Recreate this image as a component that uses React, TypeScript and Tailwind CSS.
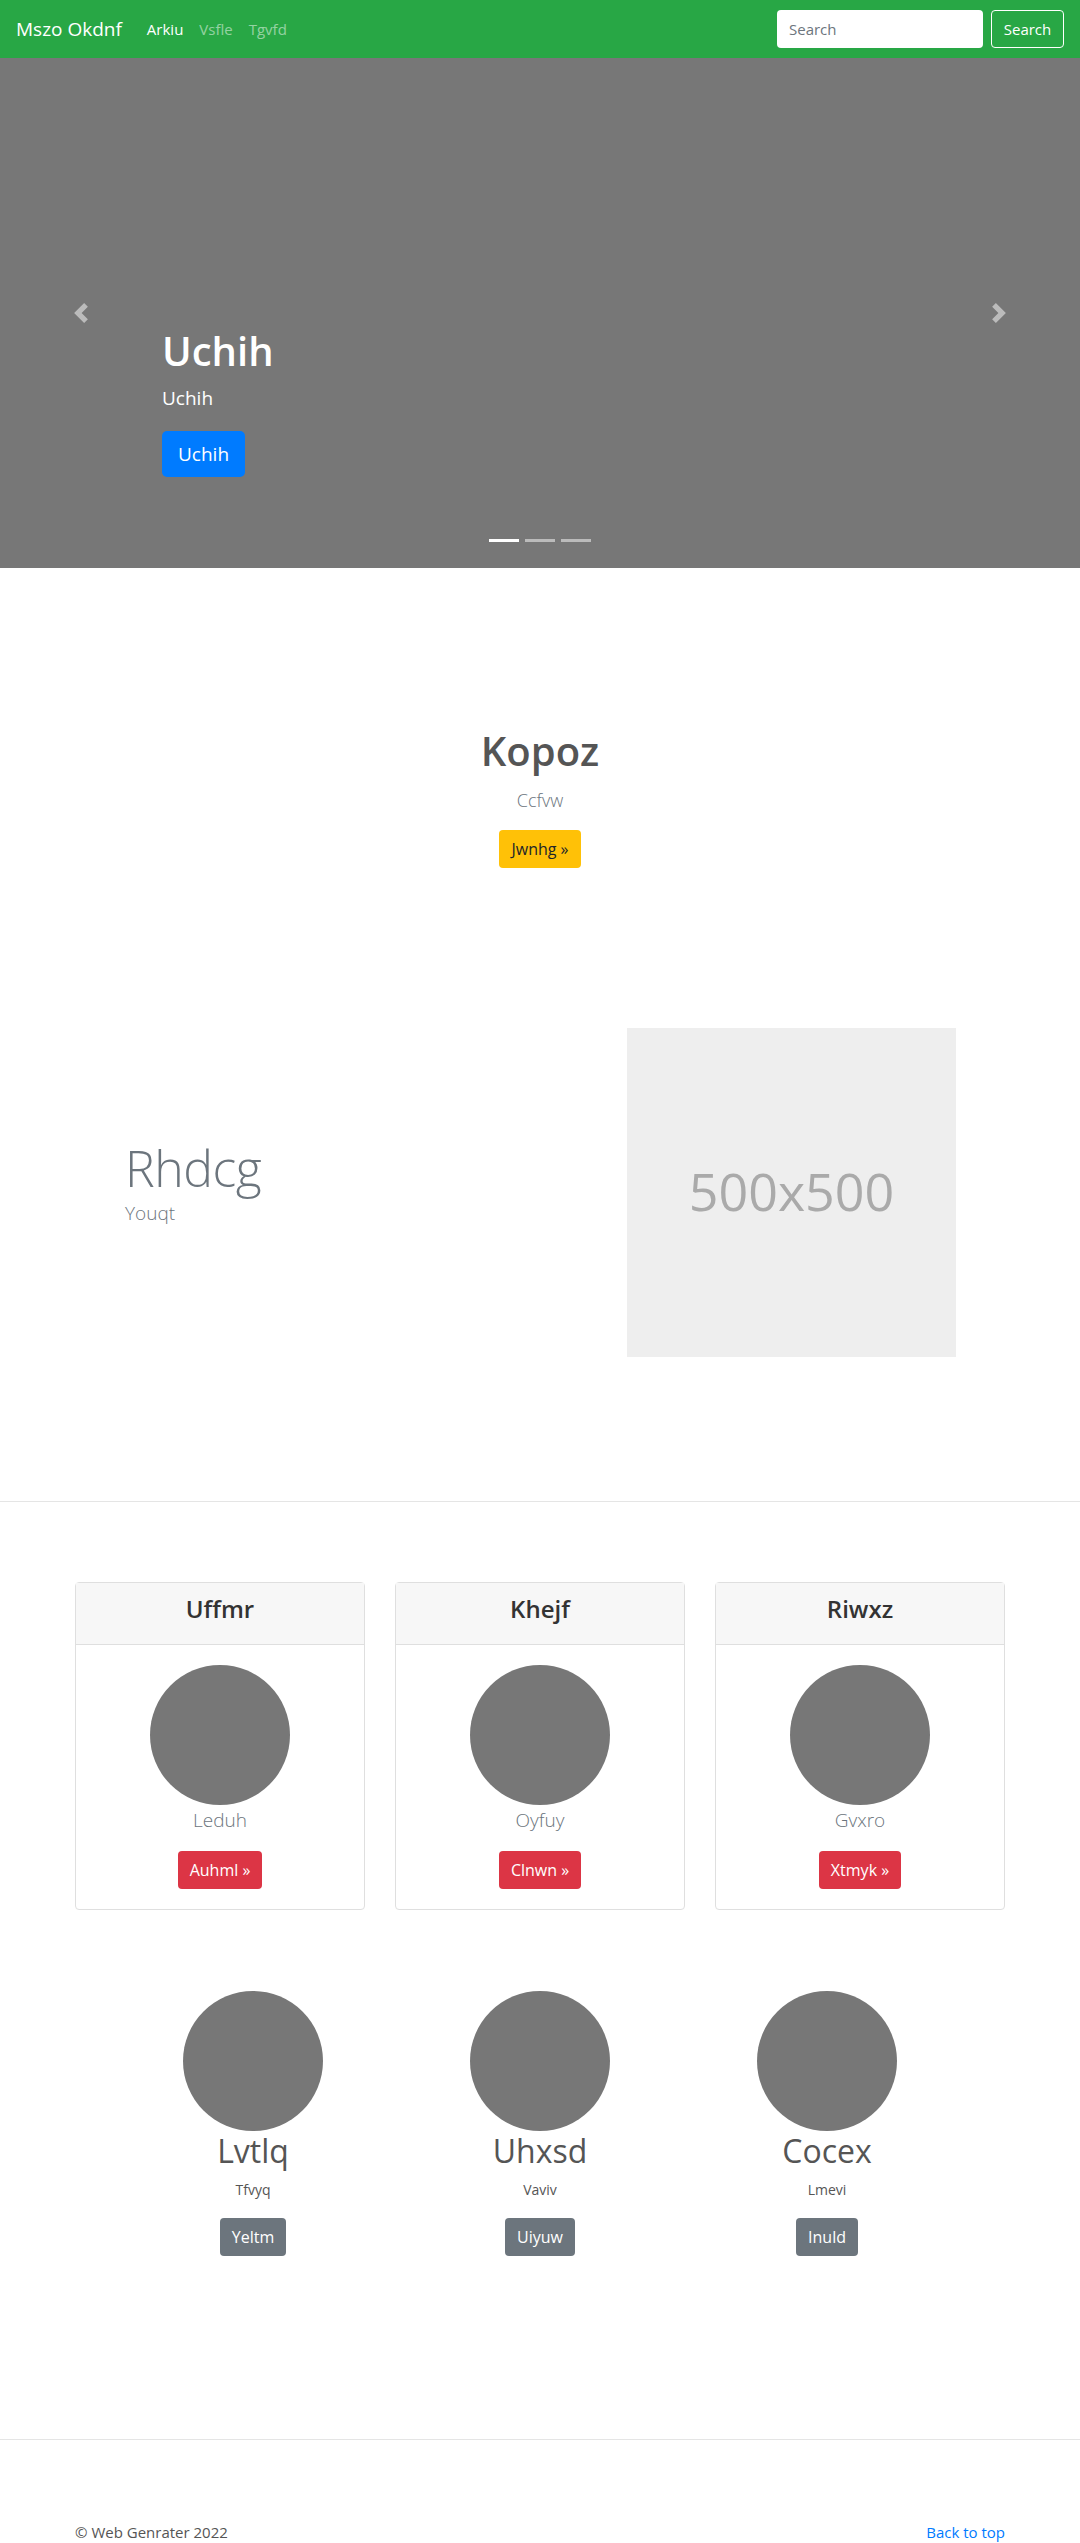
const cards = [
  { title: "Uffmr", text: "Leduh", btn: "Auhml »" },
  { title: "Khejf", text: "Oyfuy", btn: "Clnwn »" },
  { title: "Riwxz", text: "Gvxro", btn: "Xtmyk »" },
];

const people = [
  { name: "Lvtlq", text: "Tfvyq", btn: "Yeltm" },
  { name: "Uhxsd", text: "Vaviv", btn: "Uiyuw" },
  { name: "Cocex", text: "Lmevi", btn: "Inuld" },
];

function Chevron({ flip }: { flip?: boolean }) {
  return (
    <svg width="20" height="20" viewBox="0 0 8 8" className={flip ? "rotate-180" : ""}>
      <path fill="#fff" d="M5.25 0l-4 4 4 4 1.5-1.5L4.25 4l2.5-2.5L5.25 0z" />
    </svg>
  );
}

export default function App() {
  return (
    <div className="w-full bg-white font-['Open_Sans',sans-serif] text-[#212529]">
      {/* navbar */}
      <nav className="h-[58px] bg-[#28a745] flex items-center pl-4 pr-4">
        <a className="text-[19px] text-white mr-[17px] leading-[30px]">Mszo Okdnf</a>
        <ul className="flex text-[15px] leading-6">
          <li className="px-2 text-white font-medium">Arkiu</li>
          <li className="px-2 text-white/50">Vsfle</li>
          <li className="px-2 text-white/50">Tgvfd</li>
        </ul>
        <form className="ml-auto flex gap-2">
          <input
            className="w-[206px] h-[38px] rounded bg-white px-3 text-[15px] placeholder:text-[#6c757d] outline-none"
            placeholder="Search"
          />
          <button className="h-[38px] w-[73px] border border-white rounded text-white text-[15px]">
            Search
          </button>
        </form>
      </nav>

      {/* carousel */}
      <div className="relative h-[510px] bg-[#777]">
        <div className="pl-[162px] pt-[269px] text-white">
          <h1 className="text-[40px] leading-[48px] font-semibold mb-2">Uchih</h1>
          <p className="text-[19px] leading-[30px] mb-[18px]">Uchih</p>
          <a className="inline-block bg-[#007bff] rounded-[5px] px-4 py-2 text-[19px] leading-[30px]">
            Uchih
          </a>
        </div>
        <div className="absolute left-0 top-0 bottom-0 w-[15%] flex items-center justify-center opacity-50">
          <Chevron />
        </div>
        <div className="absolute right-0 top-0 bottom-0 w-[15%] flex items-center justify-center opacity-50">
          <Chevron flip />
        </div>
        <div className="absolute left-0 right-0 bottom-[26px] flex justify-center gap-[6px]">
          <span className="w-[30px] h-[3px] bg-white" />
          <span className="w-[30px] h-[3px] bg-white/50" />
          <span className="w-[30px] h-[3px] bg-white/50" />
        </div>
      </div>

      {/* jumbo */}
      <section className="pt-[159px] text-center">
        <h2 className="text-[40px] leading-[48px] font-semibold text-[#555] mb-3">Kopoz</h2>
        <p className="text-[18px] leading-[27px] font-light text-[#6c757d] mb-4">Ccfvw</p>
        <a className="inline-block bg-[#ffc107] text-[#212529] rounded px-3 py-[7px] text-[16px] leading-6">
          Jwnhg »
        </a>
      </section>

      {/* feature */}
      <section className="mt-[160px] flex items-center">
        <div className="flex-1 pl-[125px]">
          <h1 className="text-[50px] leading-[1.2] font-light tracking-[-0.5px] text-[#6c757d]">Rhdcg</h1>
          <p className="text-[19px] leading-[30px] font-light text-[#6c757d] mb-5">Youqt</p>
        </div>
        <div className="w-[329px] h-[329px] mr-[124px] bg-[#eee] flex items-center justify-center text-[#aaa] text-[52px] pb-1">
          500x500
        </div>
      </section>

      <hr className="mt-[144px] border-t border-[#e5e5e5]" />

      {/* cards */}
      <section className="mt-[80px] mx-[75px] grid grid-cols-3 gap-[30px]">
        {cards.map((c) => (
          <div key={c.title} className="border border-[#dfdfdf] rounded text-center">
            <div className="bg-[#f7f7f7] border-b border-[#dfdfdf] pt-3 pb-3">
              <h4 className="text-[24px] leading-[28.8px] font-semibold text-[#333] mb-2">{c.title}</h4>
            </div>
            <div className="p-5 flex flex-col items-center">
              <div className="w-[140px] h-[140px] rounded-full bg-[#777]" />
              <p className="text-[19px] leading-[30px] font-light text-[#6c757d] mb-4">{c.text}</p>
              <a className="inline-block bg-[#dc3545] text-white rounded px-3 py-[7px] text-[16px] leading-6">
                {c.btn}
              </a>
            </div>
          </div>
        ))}
      </section>

      {/* people */}
      <section className="mt-[81px] flex justify-center">
        {people.map((p) => (
          <div key={p.name} className="w-[287px] flex flex-col items-center text-center">
            <div className="w-[140px] h-[140px] rounded-full bg-[#777]" />
            <h2 className="text-[32px] leading-[40px] font-normal text-[#555] mb-2">{p.name}</h2>
            <p className="text-[14px] leading-[22px] text-[#555] mb-[17px]">{p.text}</p>
            <a className="inline-block bg-[#6c757d] text-white rounded px-3 py-[7px] text-[16px] leading-6">
              {p.btn}
            </a>
          </div>
        ))}
      </section>

      <hr className="mt-[183px] border-t border-[#e5e5e5]" />

      {/* footer */}
      <footer className="pt-[80px] mx-[75px] flex justify-between text-[15px] leading-6">
        <p className="text-[#555]">© Web Genrater 2022</p>
        <a className="text-[#007bff]">Back to top</a>
      </footer>
    </div>
  );
}
